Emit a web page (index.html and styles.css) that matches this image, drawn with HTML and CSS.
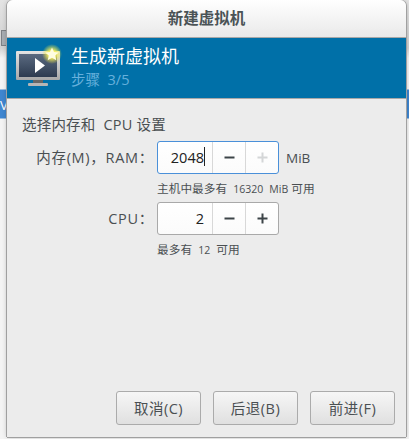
FILE: index.html
```html
<!DOCTYPE html>
<html lang="zh">
<head>
<meta charset="utf-8">
<title>新建虚拟机</title>
<link rel="stylesheet" href="styles.css">
</head>
<body>
<div class="backdrop">
  <div class="bg-tool"></div>
  <div class="bg-v">V</div>
  <div class="window">
    <header class="titlebar">新建虚拟机</header>
    <section class="banner">
      <svg class="banner-icon" width="46" height="44" viewBox="0 0 46 44">
        <defs>
          <radialGradient id="glow"><stop offset="0.35" stop-color="#f8f060"/><stop offset="1" stop-color="#f0e840" stop-opacity="0"/></radialGradient>
          <linearGradient id="scr" x1="0" y1="0" x2="0" y2="1"><stop offset="0" stop-color="#5a6a80"/><stop offset="1" stop-color="#2d3b50"/></linearGradient>
          <linearGradient id="bez" x1="0" y1="0" x2="0" y2="1"><stop offset="0" stop-color="#e4e4e4"/><stop offset="1" stop-color="#a8a8a8"/></linearGradient>
        </defs>
        <rect x="0" y="8" width="44" height="29" rx="1" fill="url(#bez)"/>
        <rect x="3" y="11" width="38" height="23" fill="url(#scr)"/>
        <path d="M19 15 L29 22.5 L19 30 Z" fill="#fff"/>
        <rect x="17" y="37" width="10" height="3" fill="#666"/>
        <rect x="12" y="40" width="20" height="3" rx="1" fill="#b5b5b5"/>
        <circle cx="36" cy="11" r="10" fill="url(#glow)"/>
        <path d="M36 4.5 L38 9 L42.8 9.4 L39.2 12.6 L40.3 17.3 L36 14.8 L31.7 17.3 L32.8 12.6 L29.2 9.4 L34 9 Z" fill="#fffde0"/>
      </svg>
      <div class="banner-text">
        <div class="banner-title">生成新虚拟机</div>
        <div class="banner-step">步骤&nbsp; 3/5</div>
      </div>
    </section>
    <main class="content">
      <div class="heading">选择内存和&nbsp; CPU 设置</div>
      <div class="form">
        <div class="label">内存(M)，RAM：</div>
        <div class="field-row">
          <div class="spin focused">
            <div class="spin-value">2048<i class="caret"></i></div>
            <div class="spin-btn">
              <svg width="11" height="11" viewBox="0 0 11 11"><rect x="0.5" y="4.5" width="10" height="2" fill="#3c4448"/></svg>
            </div>
            <div class="spin-btn">
              <svg width="11" height="11" viewBox="0 0 11 11"><path d="M0.5 4.5h4v-4h2v4h4v2h-4v4h-2v-4h-4z" fill="#d4d6d7"/></svg>
            </div>
          </div>
          <span class="unit">MiB</span>
        </div>
        <div></div>
        <div class="hint">主机中最多有 &nbsp;<span class="num">16320</span> &nbsp;<span class="num">MiB</span> 可用</div>
        <div class="label">CPU：</div>
        <div class="field-row">
          <div class="spin">
            <div class="spin-value">2</div>
            <div class="spin-btn">
              <svg width="11" height="11" viewBox="0 0 11 11"><rect x="0.5" y="4.5" width="10" height="2" fill="#3c4448"/></svg>
            </div>
            <div class="spin-btn">
              <svg width="11" height="11" viewBox="0 0 11 11"><path d="M0.5 4.5h4v-4h2v4h4v2h-4v4h-2v-4h-4z" fill="#3c4448"/></svg>
            </div>
          </div>
        </div>
        <div></div>
        <div class="hint">最多有 &nbsp;<span class="num">12</span> &nbsp;可用</div>
      </div>
      <div class="actions">
        <button class="btn">取消(C)</button>
        <button class="btn">后退(B)</button>
        <button class="btn">前进(F)</button>
      </div>
    </main>
  </div>
</div>
</body>
</html>
```
FILE: styles.css
```css
* { box-sizing: border-box; }
html, body { margin: 0; padding: 0; }
body {
  width: 409px;
  height: 439px;
  overflow: hidden;
  background: #fff;
  font-family: "Open Sans", "Noto Sans CJK SC", sans-serif;
}
.backdrop {
  position: relative;
  display: flex;
  width: 409px;
  height: 439px;
  background: linear-gradient(#e4e4e4 0, #d8d8d8 28px, #d2d2d2 48px, #f4f4f4 58px, #f4f4f4 89px, #3f86d0 90px, #3f86d0 118px, #f4f4f4 119px, #f4f4f4 100%);
}
.bg-tool {
  position: absolute;
  left: 1px;
  top: 30px;
  width: 6px;
  height: 16px;
  background: #a8adb2;
  border: 1px solid #7c8085;
}
.bg-v {
  position: absolute;
  left: 0;
  top: 97px;
  font-size: 13px;
  line-height: 16px;
  color: #fff;
}
.window {
  position: relative;
  margin-left: 7px;
  width: 399px;
  height: 437px;
  display: flex;
  flex-direction: column;
  background: #ececec;
  border-radius: 6px 6px 0 0;
  box-shadow: 0 1px 0 #a0a0a0, -1px 0 0 #a0a0a0, 1px 0 0 #a0a0a0, 0 0 5px rgba(0, 0, 0, 0.25);
}
.titlebar {
  height: 38px;
  flex: none;
  display: flex;
  align-items: center;
  justify-content: center;
  padding-bottom: 2px;
  font-size: 15.5px;
  font-weight: 700;
  color: #4a5356;
  background: linear-gradient(#ffffff, #e9e9e9);
  border-bottom: 1px solid #a8a8a8;
  border-radius: 6px 6px 0 0;
}
.banner {
  height: 61px;
  flex: none;
  display: flex;
  align-items: center;
  gap: 9px;
  padding-left: 9px;
  background: #0070a8;
  border-bottom: 1px solid #a8a8a8;
}
.banner-icon { flex: none; margin-top: -6px; }
.banner-title { font-size: 18px; line-height: 24px; color: #fff; }
.banner-step { font-size: 14.5px; line-height: 24px; color: #66b0dc; }
.content {
  flex: 1;
  display: flex;
  flex-direction: column;
  padding: 16px 11px 12px 15px;
  color: #4a4f52;
}
.heading { font-size: 14.5px; line-height: 20px; letter-spacing: 0.2px; }
.form {
  display: grid;
  grid-template-columns: 135px 1fr;
  margin-top: 6px;
}
.label {
  font-size: 14.5px;
  letter-spacing: 0.7px;
  display: flex;
  align-items: center;
  justify-content: flex-end;
  padding: 0 3px 2px 0;
  height: 33px;
}
.field-row {
  display: flex;
  align-items: center;
  gap: 7px;
  height: 33px;
}
.spin {
  display: flex;
  width: 122px;
  height: 33px;
  background: linear-gradient(#ffffff, #fbfbfb);
  border: 1px solid #a9a9a9;
  border-radius: 3px;
}
.spin.focused { border-color: #4a90d9; }
.spin-value {
  flex: 1;
  display: flex;
  justify-content: flex-end;
  align-items: center;
  font-size: 14.5px;
  color: #222;
  padding-right: 8px;
  position: relative;
}
.caret {
  position: absolute;
  right: 7px;
  top: 5px;
  width: 1px;
  height: 19px;
  background: #222;
}
.spin-btn {
  width: 33px;
  display: flex;
  align-items: center;
  justify-content: center;
  border-left: 1px solid #d8d8d8;
}
.unit { font-size: 13.5px; }
.hint {
  font-size: 11.7px;
  line-height: 16px;
  height: 28px;
  padding-top: 6px;
}
.num { font-size: 10.5px; }
.actions {
  margin-top: auto;
  display: flex;
  justify-content: flex-end;
  gap: 12px;
}
.btn {
  width: 85px;
  height: 34px;
  font-family: inherit;
  font-size: 14.5px;
  letter-spacing: 0.5px;
  color: #4a4f52;
  background: linear-gradient(#f6f6f6, #e0e0e0);
  border: 1px solid #ababab;
  border-radius: 3px;
  padding: 0 0 2px;
}
```
